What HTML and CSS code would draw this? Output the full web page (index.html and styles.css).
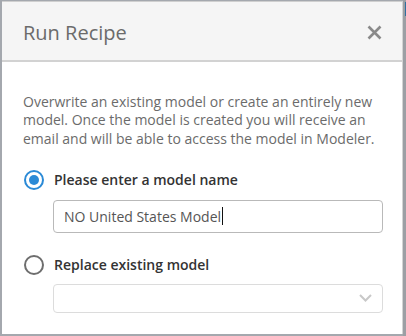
FILE: index.html
```html
<!DOCTYPE html>
<html>
<head>
<meta charset="utf-8">
<link rel="stylesheet" href="styles.css">
</head>
<body>
<div class="backdrop">
  <div class="dialog">
    <div class="header">
      <div class="title">Run Recipe</div>
      <svg class="close" width="15" height="15" viewBox="0 0 15 15"><path d="M1.5 1.5 L13.5 13.5 M13.5 1.5 L1.5 13.5" stroke="#8a8a8a" stroke-width="2.6" stroke-linecap="butt"/></svg>
    </div>
    <div class="body">
      <p class="desc">Overwrite an existing model or create an entirely new model. Once the model is created you will receive an email and will be able to access the model in Modeler.</p>
      <div class="option">
        <span class="radio checked"></span>
        <span class="label">Please enter a model name</span>
      </div>
      <div class="field input"><span class="value">NO United States Model</span><span class="caret"></span></div>
      <div class="option second">
        <span class="radio"></span>
        <span class="label">Replace existing model</span>
      </div>
      <div class="field select">
        <svg class="chev" width="13" height="8" viewBox="0 0 13 8"><path d="M1 1 L6.5 6.5 L12 1" fill="none" stroke="#c8c8c8" stroke-width="2"/></svg>
      </div>
    </div>
  </div>
  <div class="side"><div class="blue"></div></div>
</div>
</body>
</html>
```
FILE: styles.css
```css
html, body { margin: 0; padding: 0; }
body { width: 406px; height: 336px; overflow: hidden; background: #a4a8ae; font-family: "Open Sans", sans-serif; }
.backdrop { display: flex; height: 336px; }
.dialog { margin: 1px 0 2px 2px; width: 400px; background: #fff; border-top: 1px solid #cfcfcf; border-right: 1px solid #d4d4d4; display: flex; flex-direction: column; }
.side { flex: 1; background: #9c9fa4; }
.blue { height: 14px; margin-top: 2px; margin-left: 2px; background: #2f6f9e; }
.header { height: 58px; flex: none; background: #f5f5f5; border-bottom: 2px solid #d2d2d2; display: flex; align-items: center; justify-content: space-between; padding: 0 20px 0 21px; }
.title { font-size: 20px; color: #6b6b6b; padding-top: 2px; }
.close { display: block; margin-top: 2px; }
.body { padding: 31px 20px 0 21px; }
.desc { margin: 0; font-size: 14px; line-height: 18.3px; color: #6b6b6b; }
.option { display: flex; align-items: center; margin-top: 22px; height: 20px; }
.option.second { margin-top: 22px; }
.radio { width: 16px; height: 16px; border: 2px solid #6e6e6e; border-radius: 50%; box-sizing: content-box; margin-left: 1px; display: flex; align-items: center; justify-content: center; }
.radio.checked { border-color: #2b8ad6; }
.radio.checked::after { content: ""; width: 10px; height: 10px; border-radius: 50%; background: #2b8ad6; }
.label { margin-left: 10px; font-size: 14px; font-weight: 600; color: #333; }
.field { margin-left: 30px; width: 330px; box-sizing: border-box; border-radius: 4px; }
.input { margin-top: 10px; height: 33px; border: 1px solid #b9b9b9; display: flex; align-items: center; padding-left: 10px; font-size: 14px; color: #555; }
.caret { width: 1px; height: 18px; background: #111; margin-left: 1px; }
.select { margin-top: 9px; height: 29px; border: 1px solid #dcdcdc; display: flex; align-items: center; justify-content: flex-end; padding-right: 10px; }
.chev { display: block; }
```
